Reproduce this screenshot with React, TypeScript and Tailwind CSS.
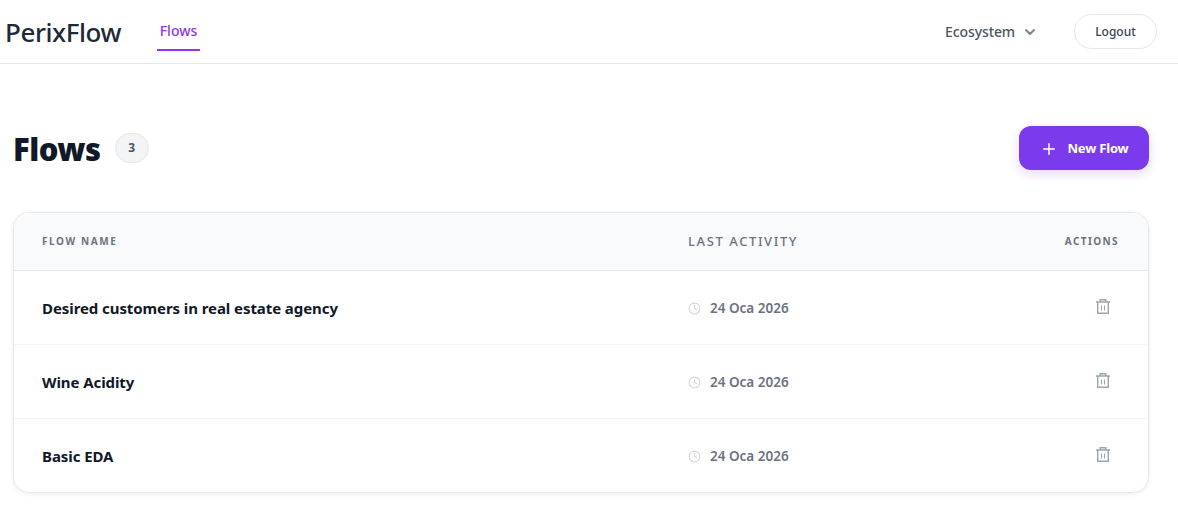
import React from "react";
import { ChevronDown, Clock, Plus } from "lucide-react";

const flows = [
  { name: "Desired customers in real estate agency", date: "24 Oca 2026" },
  { name: "Wine Acidity", date: "24 Oca 2026" },
  { name: "Basic EDA", date: "24 Oca 2026" },
];

function TrashIcon() {
  return (
    <svg width="16" height="17" viewBox="0 0 16 17" fill="none" stroke="#9ca3af" strokeWidth="1.4" className="block">
      <path d="M1 4h14" />
      <path d="M5.2 4V1.7h5.6V4" />
      <path d="M2.7 4v11.3h10.6V4" />
      <path d="M6.5 7.5v5M9.5 7.5v5" strokeWidth="1.1" />
    </svg>
  );
}

export default function App() {
  return (
    <div className="min-h-[530px] bg-white font-['Noto_Sans',sans-serif]">
      <header className="flex h-16 items-center justify-between border-b border-[#e5e7eb] pl-[5px] pr-[21px]">
        <div className="flex h-full items-center">
          <span className="w-[152px] text-[26px] font-medium leading-none tracking-[-0.45px] text-[#1f2937]">PerixFlow</span>
          <a className="mt-[1px] flex h-[38px] w-[43px] items-center justify-center border-b-2 border-[#9333ea] text-sm font-medium text-[#9333ea]">
            Flows
          </a>
        </div>
        <div className="flex items-center">
          <button className="flex items-center gap-[7px] text-sm font-medium tracking-[-0.1px] text-[#4b5563]">
            Ecosystem
            <ChevronDown className="h-4 w-4 text-[#7b8290]" strokeWidth={3} />
          </button>
          <button className="ml-[36px] h-[35px] w-[83px] rounded-full border border-[#e5e7eb] text-xs font-medium text-[#374151]">
            Logout
          </button>
        </div>
      </header>

      <main className="pl-[13px] pr-[29px] pt-[62px]">
        <div className="flex items-center justify-between">
          <div className="flex items-center gap-[14px]">
            <h1 className="mt-[2px] text-[31px] font-black leading-none tracking-[-0.5px] text-[#111827]">Flows</h1>
            <span className="flex h-[30px] w-[34px] items-center justify-center rounded-full border border-[#e5e7eb] bg-[#f3f4f6] text-xs font-bold text-[#4b5563]">
              3
            </span>
          </div>
          <button className="flex h-11 w-[130px] items-center justify-center gap-[10px] rounded-xl bg-[#7c3aed] pt-[1px] text-[13px] font-bold tracking-[-0.2px] text-white shadow-[0_4px_12px_rgba(124,58,237,0.2)]">
            <Plus className="h-[18px] w-[18px]" strokeWidth={2} />
            New Flow
          </button>
        </div>

        <div className="mt-[42px] overflow-hidden rounded-2xl border border-[#e5e7eb] shadow-[0_1px_4px_rgba(0,0,0,0.08)]">
          <div className="flex h-[58px] items-center border-b border-[#e5e7eb] bg-[#f9fafb] pl-7 pr-[29px]">
            <span className="w-[646px] text-[10px] font-bold uppercase tracking-[1.6px] text-[#6b7280]">Flow Name</span>
            <span className="flex-1 text-[13px] font-medium uppercase tracking-[1.6px] text-[#6b7280]">Last Activity</span>
            <span className="text-[10px] font-bold uppercase tracking-[1.4px] text-[#6b7280]">Actions</span>
          </div>
          {flows.map((flow) => (
            <div key={flow.name} className="flex h-[74px] items-center border-b border-[#f3f4f6] pl-7 pr-[37px] last:h-[73px] last:border-b-0">
              <span className="mt-[2px] w-[646px] text-[15px] font-bold tracking-[-0.08px] text-[#111827]">{flow.name}</span>
              <span className="mt-[1px] flex flex-1 items-center gap-[9px] text-[13.5px] font-semibold text-[#6b7280]">
                <Clock className="h-[13px] w-[13px] text-[#d1d5db]" />
                {flow.date}
              </span>
              <span className="-mt-[2px]"><TrashIcon /></span>
            </div>
          ))}
        </div>
      </main>
    </div>
  );
}
